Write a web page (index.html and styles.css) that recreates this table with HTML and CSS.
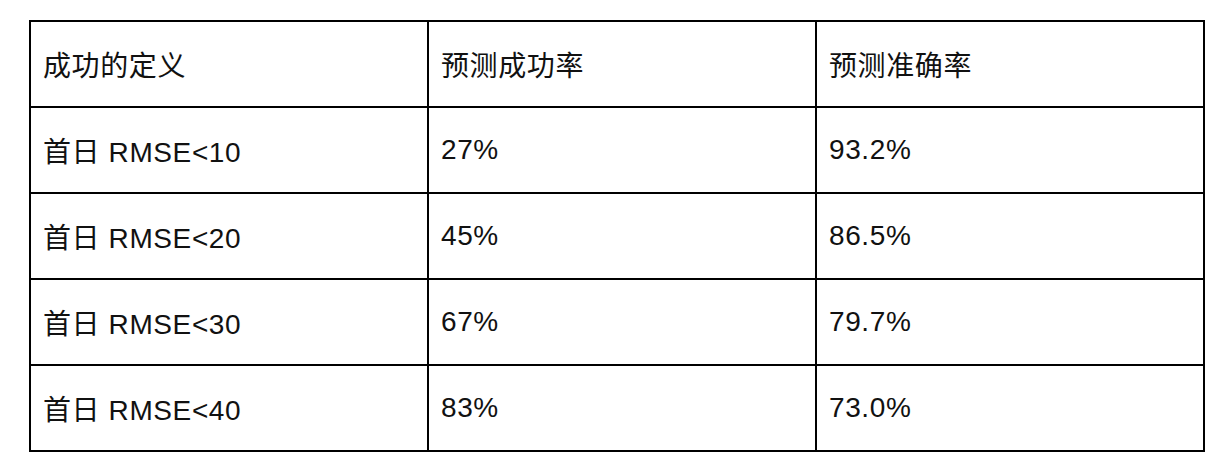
FILE: index.html
```html
<!DOCTYPE html>
<html lang="zh-CN">
<head>
<meta charset="utf-8">
<title>成功的定义</title>
<link rel="stylesheet" href="styles.css">
</head>
<body>
<div class="table" role="table">
  <div class="cell" role="columnheader">成功的定义</div>
  <div class="cell" role="columnheader">预测成功率</div>
  <div class="cell" role="columnheader">预测准确率</div>

  <div class="cell">首日 RMSE&lt;10</div>
  <div class="cell">27%</div>
  <div class="cell">93.2%</div>

  <div class="cell">首日 RMSE&lt;20</div>
  <div class="cell">45%</div>
  <div class="cell">86.5%</div>

  <div class="cell">首日 RMSE&lt;30</div>
  <div class="cell">67%</div>
  <div class="cell">79.7%</div>

  <div class="cell">首日 RMSE&lt;40</div>
  <div class="cell">83%</div>
  <div class="cell">73.0%</div>
</div>
</body>
</html>
```
FILE: styles.css
```css
html, body {
  margin: 0;
  background: #fff;
}
body {
  padding: 20px 0 0 29px;
  font-family: "Liberation Sans", "Noto Sans CJK SC", sans-serif;
  font-size: 28px;
  color: #111;
}
.table {
  display: grid;
  grid-template-columns: 398px 388px 388px;
  grid-auto-rows: 86px;
  width: 1176px;
  box-sizing: border-box;
  border-left: 2px solid #000;
  border-top: 2px solid #000;
}
.cell {
  box-sizing: border-box;
  border-right: 2px solid #000;
  border-bottom: 2px solid #000;
  padding: 0 0 0 12px;
  display: flex;
  align-items: center;
  white-space: nowrap;
  letter-spacing: 0.6px;
}
```
